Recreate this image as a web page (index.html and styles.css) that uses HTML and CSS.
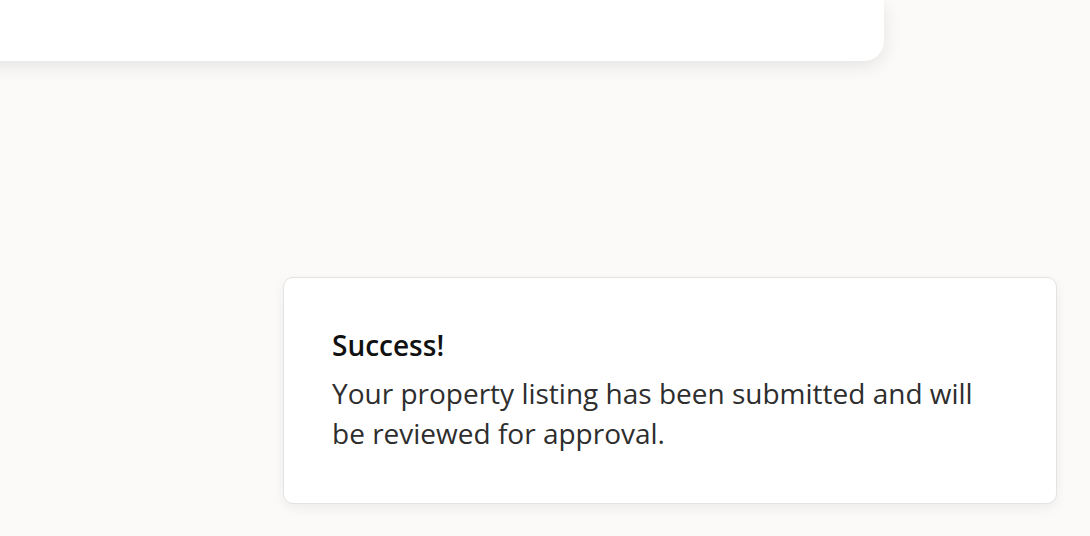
FILE: index.html
```html
<!DOCTYPE html>
<html>
<head>
<meta charset="utf-8">
<link rel="stylesheet" href="styles.css">
</head>
<body>
<div class="page">
  <div class="card"></div>
  <div class="toast-area">
    <div class="toast">
      <div class="toast-title">Success!</div>
      <div class="toast-body">Your property listing has been submitted and will be reviewed for approval.</div>
    </div>
  </div>
</div>
</body>
</html>
```
FILE: styles.css
```css
html, body {
  margin: 0;
  padding: 0;
}
body {
  background: #fbfaf8;
  font-family: "Open Sans", "Liberation Sans", sans-serif;
  width: 1090px;
  height: 536px;
  overflow: hidden;
}
.page {
  display: flex;
  flex-direction: column;
  height: 536px;
}
.card {
  margin-left: -40px;
  width: 924px;
  height: 61px;
  background: #ffffff;
  border-radius: 0 0 20px 20px;
  box-shadow: 0 5px 18px rgba(0, 0, 0, 0.09);
}
.toast-area {
  display: flex;
  justify-content: flex-end;
  padding-top: 216px;
  padding-right: 33px;
}
.toast {
  box-sizing: border-box;
  width: 774px;
  padding: 48px 60px 50px 48px;
  background: #ffffff;
  border: 1px solid #e3e3e3;
  border-radius: 10px;
  box-shadow: 0 4px 12px rgba(0, 0, 0, 0.06);
  color: #222222;
}
.toast-title {
  font-size: 28px;
  font-weight: 600;
  line-height: 38px;
  color: #111111;
  margin-bottom: 9px;
}
.toast-body {
  font-size: 28px;
  line-height: 40px;
  color: #2e2e2e;
}
```
